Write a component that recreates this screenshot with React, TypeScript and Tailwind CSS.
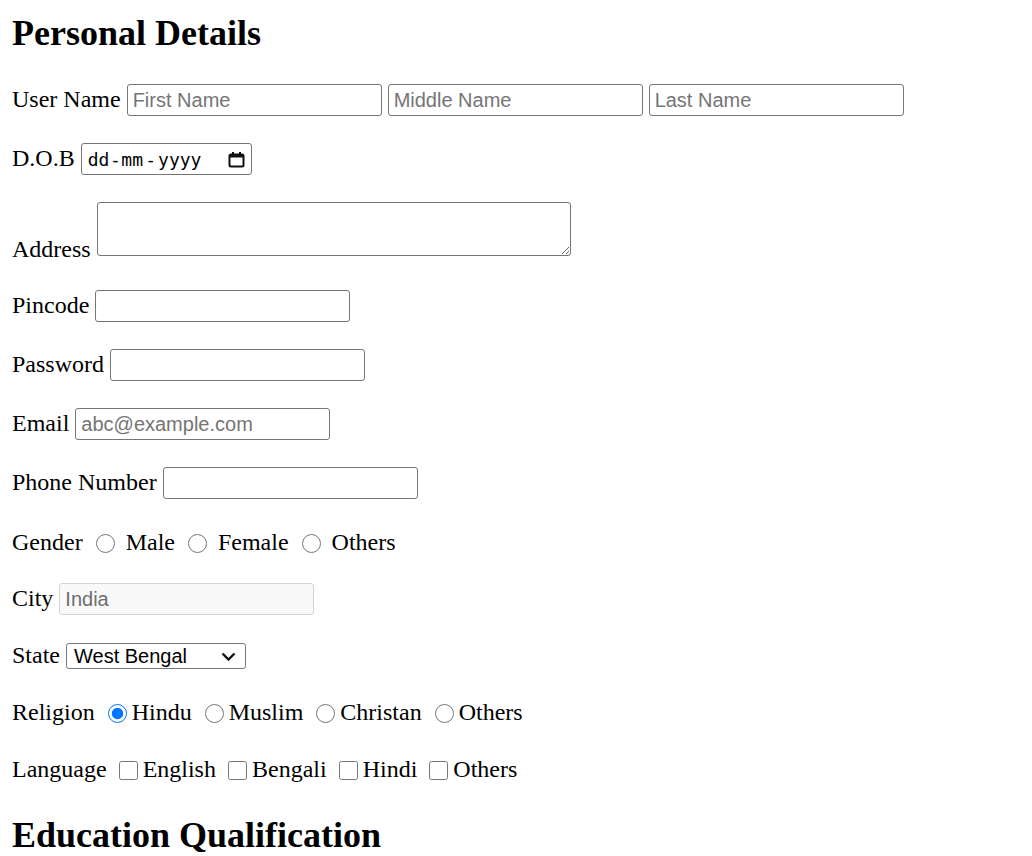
import {ReactNode} from "react";

const serif = "font-['Liberation_Serif','Times_New_Roman',serif]";
const sans = "font-['Liberation_Sans',Arial,sans-serif]";

function TextBox({placeholder, width = "w-[255px]"}: { placeholder?: string; width?: string }) {
    return <input
        type="text"
        placeholder={placeholder}
        className={`${sans} ${width} h-[32px] text-[20px] text-black border border-[#767676] rounded-[3px] bg-white pl-[5px] pr-[3px] placeholder:text-[#757575] outline-none`}
    />
}

function Row({label, className = "", children}: { label: string; className?: string; children: ReactNode }) {
    return <div className={`flex items-center h-[32px] ${className}`}>
        <span className="leading-[27.6px] mr-[6px]">{label}</span>
        {children}
    </div>
}

function Radio({checked, label, tight}: { checked?: boolean; label: string; tight?: boolean }) {
    return <>
        <input
            type="radio"
            defaultChecked={checked}
            name={label}
            className="w-[19px] h-[19px] ml-[13px] accent-[#0075ff]"
        />
        <span className={`leading-[27.6px] ${tight ? "ml-[5px]" : "ml-[11px]"}`}>{label}</span>
    </>
}

function Check({label}: { label: string }) {
    return <>
        <input
            type="checkbox"
            className="w-[19px] h-[19px] ml-[12px] accent-[#0075ff]"
        />
        <span className="leading-[27.6px] ml-[5px]">{label}</span>
    </>
}

function CalendarIcon() {
    return <svg width="17" height="17" viewBox="0 0 17 17">
        <rect x="1.5" y="3.5" width="14" height="12" rx="1.5" fill="none" stroke="#111" strokeWidth="2"/>
        <rect x="1.5" y="3.5" width="14" height="3" fill="#111"/>
        <rect x="4" y="1" width="2" height="3" fill="#111"/>
        <rect x="11" y="1" width="2" height="3" fill="#111"/>
    </svg>
}

export default function App() {
    return <div className={`${serif} text-[24px] text-black bg-white min-h-[856px] pl-[12px] flex flex-col`}>
        <h2 className="text-[36px] font-bold leading-[41px] mt-[13px]">Personal Details</h2>

        <Row label="User Name" className="mt-[30px]">
            <TextBox placeholder="First Name"/>
            <span className="w-[6px]"/>
            <TextBox placeholder="Middle Name"/>
            <span className="w-[6px]"/>
            <TextBox placeholder="Last Name"/>
        </Row>

        <Row label="D.O.B" className="mt-[27px]">
            <div className="w-[171px] h-[32px] border border-[#767676] rounded-[3px] flex items-center pl-[6px] pr-[6px] font-['DejaVu_Sans_Mono',monospace] text-[18px]">
                <span>dd</span>
                <span className="w-[12px] text-center">-</span>
                <span>mm</span>
                <span className="w-[15px] text-center">-</span>
                <span>yyyy</span>
                <span className="ml-auto flex items-center"><CalendarIcon/></span>
            </div>
        </Row>

        <div className="flex items-end mt-[27px]">
            <span className="leading-[27.6px] mr-[6px] mb-[-8px]">Address</span>
            <textarea className="w-[474px] h-[54px] border border-[#767676] rounded-[3px] resize outline-none"/>
        </div>

        <Row label="Pincode" className="mt-[34px]"><TextBox/></Row>
        <Row label="Password" className="mt-[27px]"><TextBox/></Row>
        <Row label="Email" className="mt-[27px]"><TextBox placeholder="abc@example.com"/></Row>
        <Row label="Phone Number" className="mt-[27px]"><TextBox/></Row>

        <div className="flex items-center h-[32px] mt-[28px]">
            <span className="leading-[27.6px]">Gender</span>
            <Radio label="Male"/>
            <Radio label="Female"/>
            <Radio label="Others"/>
        </div>

        <Row label="City" className="mt-[24px]">
            <input
                type="text"
                readOnly
                value="India"
                className={`${sans} w-[255px] h-[32px] text-[20px] text-[#6d6d6d] border border-[#d4d4d4] rounded-[3px] bg-[#f9f9f9] pl-[5px] outline-none`}
            />
        </Row>

        <div className="flex items-center h-[26px] mt-[28px]">
            <span className="leading-[27.6px] mr-[6px]">State</span>
            <div className={`${sans} w-[180px] h-[26px] border border-[#767676] rounded-[3px] flex items-center pl-[7px] pr-[9px] text-[20px]`}>
                <span>West Bengal</span>
                <svg className="ml-auto" width="15" height="9" viewBox="0 0 15 9">
                    <path d="M1.5 1.5 L7.5 7.5 L13.5 1.5" fill="none" stroke="#111" strokeWidth="2.4"/>
                </svg>
            </div>
        </div>

        <div className="flex items-center h-[32px] mt-[28px]">
            <span className="leading-[27.6px]">Religion</span>
            <Radio label="Hindu" checked tight/>
            <Radio label="Muslim" tight/>
            <Radio label="Christan" tight/>
            <Radio label="Others" tight/>
        </div>

        <div className="flex items-center h-[32px] mt-[25px]">
            <span className="leading-[27.6px]">Language</span>
            <Check label="English"/>
            <Check label="Bengali"/>
            <Check label="Hindi"/>
            <Check label="Others"/>
        </div>

        <h2 className="text-[36px] font-bold leading-[41px] mt-[29px]">Education Qualification</h2>
    </div>
}
